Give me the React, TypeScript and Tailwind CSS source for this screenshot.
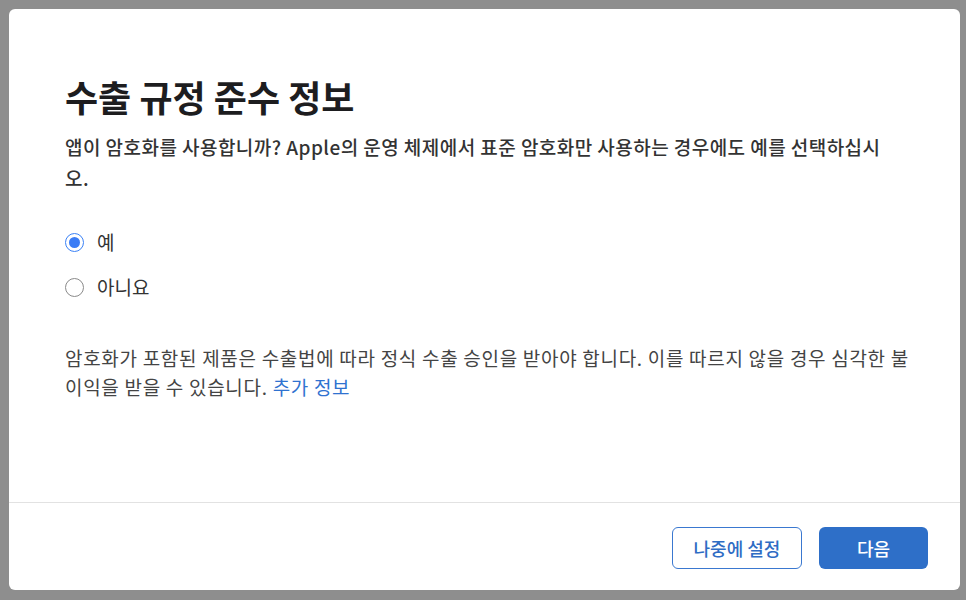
import { useState } from "react";

function Radio({ checked, label, onClick }: { checked: boolean; label: string; onClick: () => void }) {
  return (
    <label className="flex cursor-pointer items-center gap-[13px]" onClick={onClick}>
      <span
        className={`flex h-[19px] w-[19px] items-center justify-center rounded-full border-[1.5px] ${
          checked ? "border-[#3b82f6]" : "border-[#8a8a8a]"
        }`}
      >
        {checked && <span className="h-[11px] w-[11px] rounded-full bg-[#3b7cf5]" />}
      </span>
      <span className="text-[19px] leading-[26px] text-[#333]">{label}</span>
    </label>
  );
}

export default function App() {
  const [choice, setChoice] = useState(0);

  return (
    <div
      className="flex h-[600px] w-full flex-col bg-[#8e8e8e] pb-[10px] pl-[9px] pr-[6px] pt-[9px]"
      style={{ fontFamily: '"Noto Sans CJK KR", "Noto Sans", sans-serif' }}
    >
      <div className="flex flex-1 flex-col rounded-[6px] bg-white">
        <div className="flex-1 pl-[56px] pr-[34px] pt-[66px]">
          <h1 className="text-[36px] font-bold leading-[42px] text-[#1d1d1f]">수출 규정 준수 정보</h1>
          <p className="mt-[14px] max-w-[835px] text-[19px] font-medium leading-[31px] tracking-[0.45px] text-[#333]">
            앱이 암호화를 사용합니까? Apple의 운영 체제에서 표준 암호화만 사용하는 경우에도 예를 선택하십시오.
          </p>
          <div className="mt-[36px] flex flex-col gap-[19px]">
            <Radio checked={choice === 0} label="예" onClick={() => setChoice(0)} />
            <Radio checked={choice === 1} label="아니요" onClick={() => setChoice(1)} />
          </div>
          <p className="mt-[43px] text-[19px] leading-[29px] tracking-[0.7px] text-[#444]">
            암호화가 포함된 제품은 수출법에 따라 정식 수출 승인을 받아야 합니다. 이를 따르지 않을 경우 심각한 불이익을 받을 수 있습니다.{" "}
            <a className="text-[#2f72d0]" href="#">
              추가 정보
            </a>
          </p>
        </div>
        <div className="flex justify-end gap-[17px] border-t border-[#e2e2e2] pb-[21px] pr-[32px] pt-[24px]">
          <button className="h-[42px] w-[130px] rounded-[6px] border border-[#3a78d0] text-[18px] font-medium text-[#2f6cc4]">
            나중에 설정
          </button>
          <button className="h-[42px] w-[109px] rounded-[6px] bg-[#2e6fc8] text-[18px] font-medium text-white">
            다음
          </button>
        </div>
      </div>
    </div>
  );
}
